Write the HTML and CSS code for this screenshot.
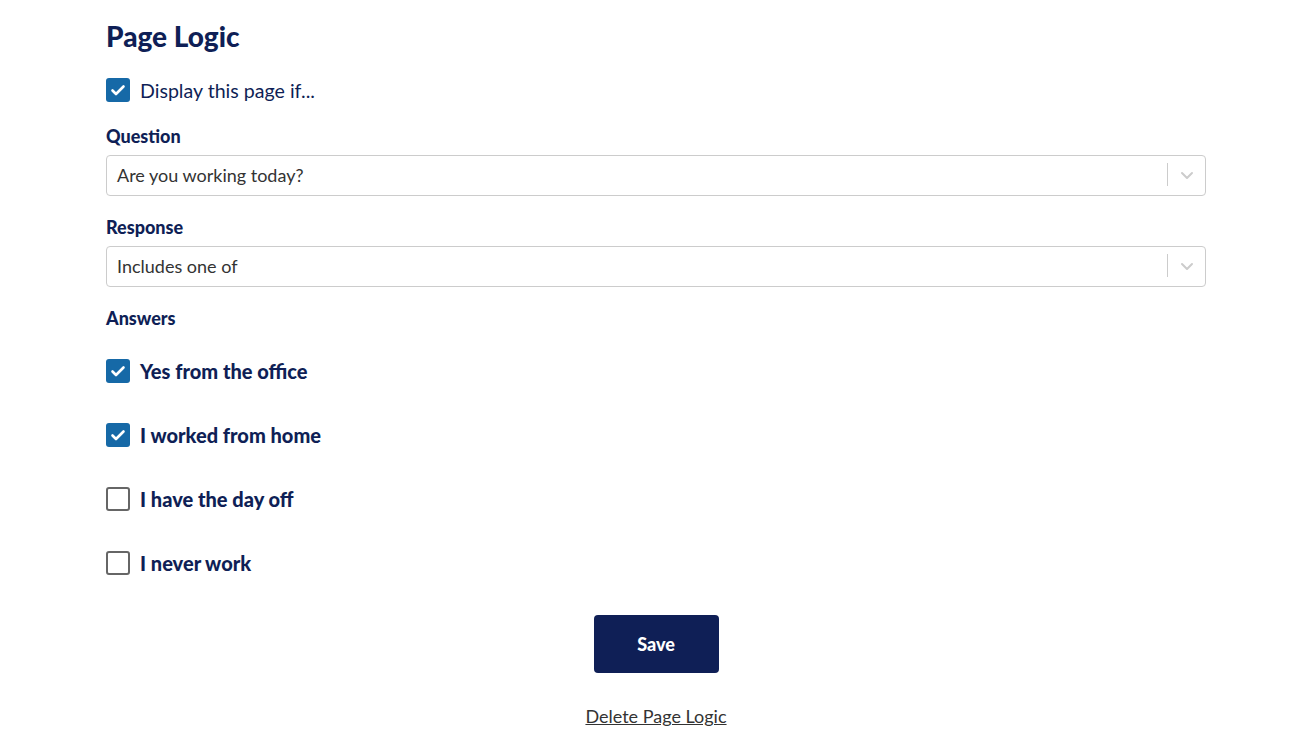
FILE: index.html
```html
<!DOCTYPE html>
<html lang="en">
<head>
    <meta charset="UTF-8">
    <meta name="viewport" content="width=device-width, initial-scale=1.0">
    <title>Page Logic</title>
    <link rel="stylesheet" href="styles.css">
</head>
<body>
    <div class="page">
        <h1 class="title">Page Logic</h1>

        <label class="check-row toggle">
            <span class="box checked">
                <svg viewBox="0 0 24 24" width="24" height="24"><path d="M6.5 12.5l3.5 3.5 7.5-7.5" fill="none" stroke="#fff" stroke-width="2.6" stroke-linecap="round" stroke-linejoin="round"/></svg>
            </span>
            <span>Display this page if...</span>
        </label>

        <div class="field-label first">Question</div>
        <div class="select">
            <span class="select-value">Are you working today?</span>
            <span class="select-sep"></span>
            <svg class="chevron" viewBox="0 0 20 20" width="20" height="20"><path d="M5 8l5 5 5-5" fill="none" stroke="#cccccc" stroke-width="2" stroke-linecap="round" stroke-linejoin="round"/></svg>
        </div>

        <div class="field-label">Response</div>
        <div class="select">
            <span class="select-value">Includes one of</span>
            <span class="select-sep"></span>
            <svg class="chevron" viewBox="0 0 20 20" width="20" height="20"><path d="M5 8l5 5 5-5" fill="none" stroke="#cccccc" stroke-width="2" stroke-linecap="round" stroke-linejoin="round"/></svg>
        </div>

        <div class="field-label">Answers</div>
        <div class="answers">
            <label class="check-row answer">
                <span class="box checked">
                    <svg viewBox="0 0 24 24" width="24" height="24"><path d="M6.5 12.5l3.5 3.5 7.5-7.5" fill="none" stroke="#fff" stroke-width="2.6" stroke-linecap="round" stroke-linejoin="round"/></svg>
                </span>
                <span>Yes from the office</span>
            </label>
            <label class="check-row answer">
                <span class="box checked">
                    <svg viewBox="0 0 24 24" width="24" height="24"><path d="M6.5 12.5l3.5 3.5 7.5-7.5" fill="none" stroke="#fff" stroke-width="2.6" stroke-linecap="round" stroke-linejoin="round"/></svg>
                </span>
                <span>I worked from home</span>
            </label>
            <label class="check-row answer">
                <span class="box"></span>
                <span>I have the day off</span>
            </label>
            <label class="check-row answer">
                <span class="box"></span>
                <span>I never work</span>
            </label>
        </div>

        <div class="actions">
            <button class="save">Save</button>
            <a class="delete" href="#">Delete Page Logic</a>
        </div>
    </div>
</body>
</html>
```

FILE: styles.css
```css
body {
    margin: 0;
    font-family: Lato, "Open Sans", Arial, sans-serif;
    background-color: #fff;
    color: #0f1f56;
}

.page {
    width: 1100px;
    margin: 0 auto;
    padding-top: 19px;
}

.title {
    margin: 0;
    font-size: 28px;
    line-height: 34px;
    font-weight: 900;
}

.check-row {
    display: flex;
    align-items: center;
    gap: 10px;
    height: 24px;
    cursor: pointer;
}

.toggle {
    margin-top: 25px;
    font-size: 19.6px;
}

.box {
    width: 24px;
    height: 24px;
    box-sizing: border-box;
    border: 2px solid #666;
    border-radius: 3px;
    flex-shrink: 0;
}

.box.checked {
    border: none;
    background-color: #1669a7;
}

.box svg {
    display: block;
}

.field-label {
    margin-top: 20px;
    font-size: 18px;
    line-height: 22px;
    font-weight: 900;
}

.field-label.first {
    margin-top: 23px;
}

.select {
    display: flex;
    align-items: center;
    height: 41px;
    box-sizing: border-box;
    margin-top: 8px;
    padding-left: 10px;
    padding-bottom: 2px;
    border: 1px solid #cccccc;
    border-radius: 4px;
    color: #333;
    font-size: 18px;
}

.select-value {
    flex: 1;
}

.select-sep {
    width: 1px;
    height: 23px;
    background-color: #cccccc;
}

.chevron {
    margin: 0 8px 0 9px;
}

.answers {
    display: flex;
    flex-direction: column;
    gap: 40px;
    margin-top: 30px;
}

.answer {
    font-size: 20px;
    font-weight: 900;
}

.actions {
    display: flex;
    flex-direction: column;
    align-items: center;
    margin-top: 40px;
}

.save {
    width: 125px;
    height: 58px;
    border: none;
    border-radius: 4px;
    background-color: #0f1f56;
    color: #fff;
    font-family: inherit;
    font-size: 18px;
    font-weight: 900;
    cursor: pointer;
}

.delete {
    margin-top: 32px;
    font-size: 18px;
    line-height: 22px;
    color: #333;
}
```
